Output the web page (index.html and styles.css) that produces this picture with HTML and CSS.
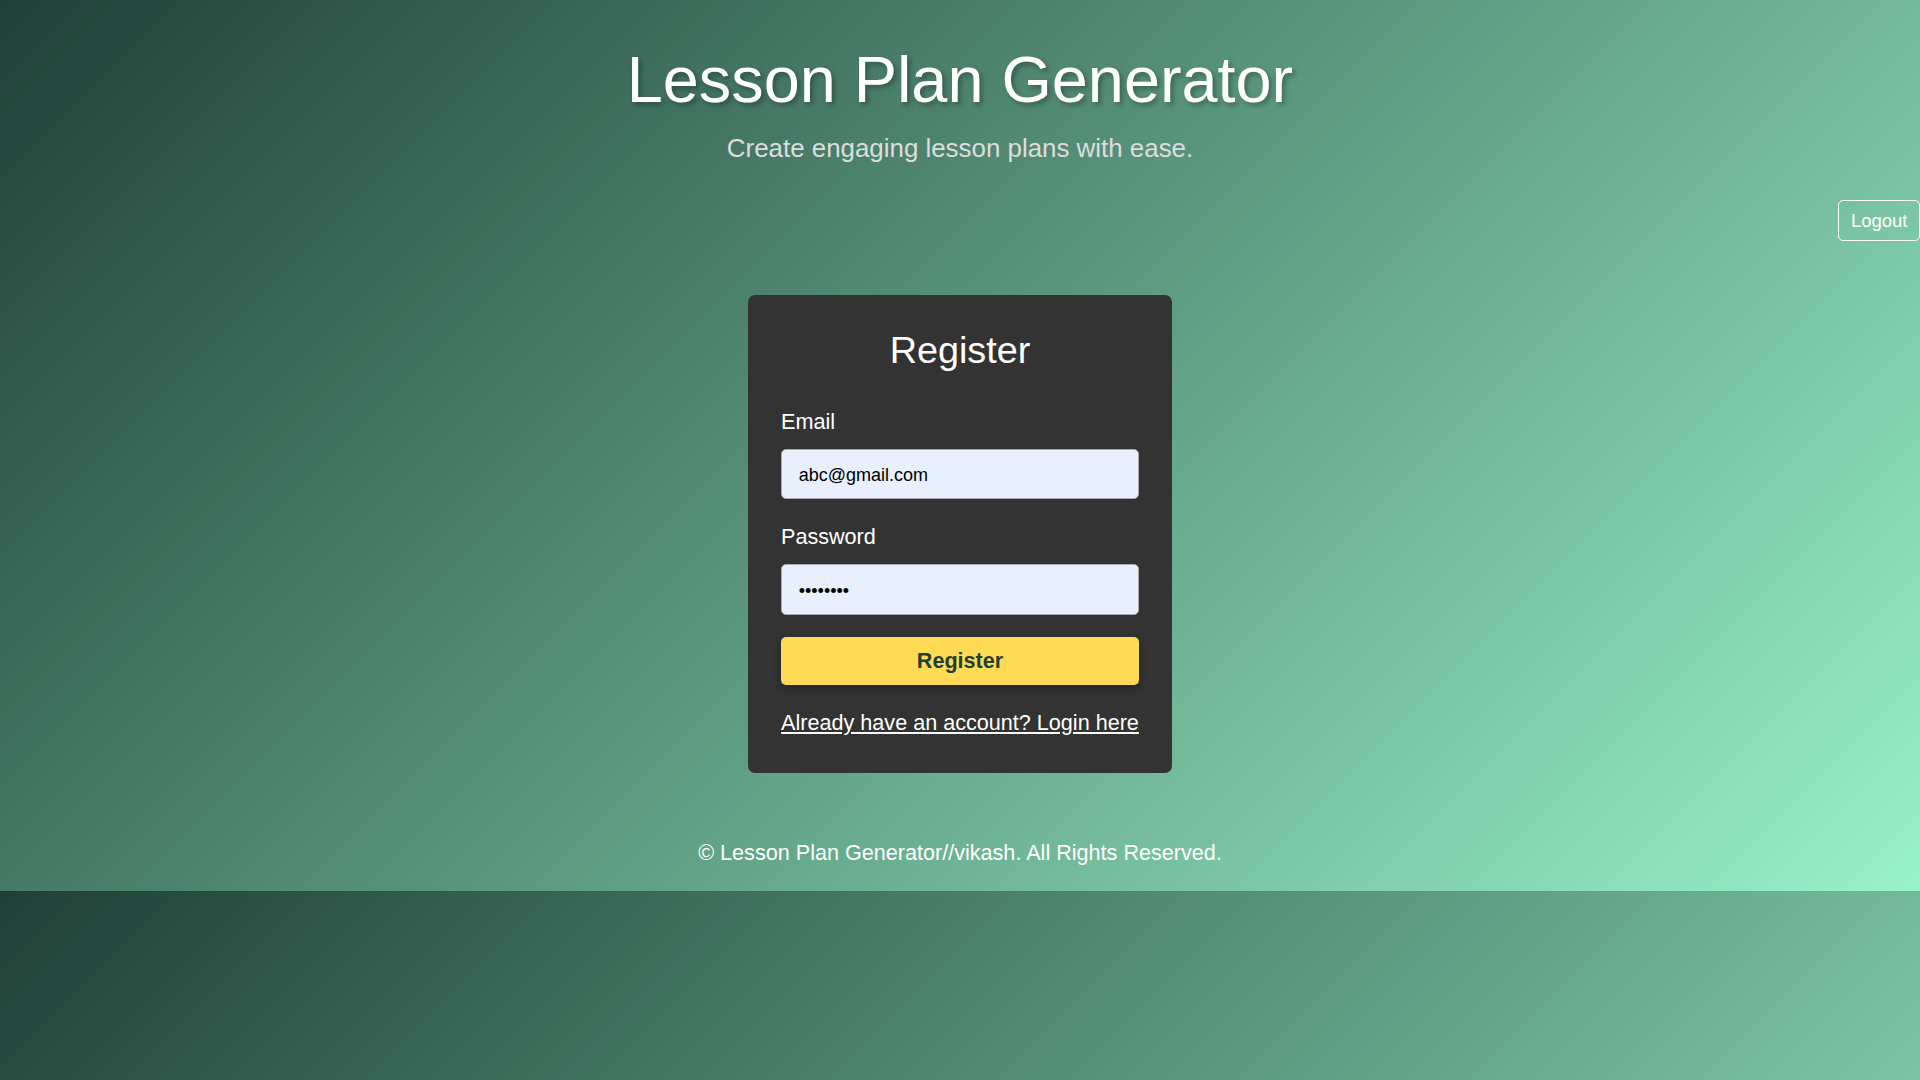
FILE: index.html
```html
<!DOCTYPE html>
<html lang="en">
<head>
<meta charset="UTF-8">
<title>Lesson Plan Generator</title>
<link rel="stylesheet" href="styles.css">
</head>
<body>
<header class="site-header">
  <h1 class="site-title">Lesson Plan Generator</h1>
  <p class="site-subtitle">Create engaging lesson plans with ease.</p>
</header>
<nav class="top-nav">
  <button class="logout-btn" type="button">Logout</button>
</nav>
<main class="main">
  <section class="auth-card">
    <h2 class="auth-title">Register</h2>
    <form class="auth-form">
      <label class="field-label field-label-first" for="email">Email</label>
      <input class="field-input" id="email" type="email" value="abc@gmail.com">
      <label class="field-label field-label-next" for="password">Password</label>
      <input class="field-input field-input-pw" id="password" type="password" value="password">
      <button class="submit-btn" type="button">Register</button>
      <a class="auth-link" href="#">Already have an account? Login here</a>
    </form>
  </section>
</main>
<footer class="site-footer">
  <p class="footer-text">&copy; Lesson Plan Generator//vikash. All Rights Reserved.</p>
</footer>
</body>
</html>
```
FILE: styles.css
```css
html {
  background: linear-gradient(135deg, #1f4037, #99f2c8);
}
body {
  margin: 0;
  font-family: "Liberation Sans", Arial, sans-serif;
  color: #fff;
}
.site-header {
  padding-top: 42.6px;
  text-align: center;
}
.site-title {
  margin: 0;
  font-size: 64.8px;
  line-height: 1.15;
  font-weight: normal;
  text-shadow: 2.7px 2.7px 5.4px rgba(0, 0, 0, 0.3);
}
.site-subtitle {
  margin: 16.5px 0 0;
  font-size: 25.9px;
  line-height: 1.15;
  color: #dddddd;
}
.top-nav {
  display: flex;
  justify-content: flex-end;
  padding-top: 36.6px;
}
.logout-btn {
  box-sizing: border-box;
  height: 41px;
  padding: 0 11.5px;
  background: transparent;
  color: #fff;
  border: 1px solid #fff;
  border-radius: 5px;
  font-family: "Liberation Sans", Arial, sans-serif;
  font-size: 18.5px;
  line-height: 21px;
  cursor: pointer;
}
.main {
  display: flex;
  justify-content: center;
  padding-top: 54px;
}
.auth-card {
  box-sizing: border-box;
  width: 424px;
  padding: 34px 33px 37.1px;
  background: #333333;
  border-radius: 7px;
}
.auth-title {
  margin: 0;
  text-align: center;
  font-size: 37.8px;
  line-height: 1.15;
  font-weight: normal;
}
.auth-form {
  display: flex;
  flex-direction: column;
}
.field-label {
  display: block;
  font-size: 21.6px;
  line-height: 1.15;
}
.field-label-first {
  margin-top: 37.7px;
}
.field-label-next {
  margin-top: 26.3px;
}
.field-input {
  box-sizing: border-box;
  width: 100%;
  height: 50px;
  margin-top: 13.9px;
  padding: 3px 16.7px 0;
  background: #e8f0fe;
  color: #000;
  border: 1px solid #a9a9a9;
  border-radius: 5px;
  font-family: "Liberation Sans", Arial, sans-serif;
  font-size: 18px;
  outline: none;
}
.field-input-pw {
  height: 51px;
  padding-top: 4px;
}
.submit-btn {
  box-sizing: border-box;
  width: 100%;
  height: 48px;
  margin-top: 22px;
  background: #ffda55;
  color: #1f4037;
  border: none;
  border-radius: 5px;
  font-family: "Liberation Sans", Arial, sans-serif;
  font-size: 21.6px;
  font-weight: bold;
  box-shadow: 0 3px 8px rgba(0, 0, 0, 0.3);
  cursor: pointer;
}
.auth-link {
  display: block;
  margin-top: 26.1px;
  text-align: center;
  color: #fff;
  font-size: 21.6px;
  line-height: 1.15;
  text-decoration: underline;
  white-space: nowrap;
}
.site-footer {
  padding-top: 68.1px;
  padding-bottom: 25.1px;
  text-align: center;
}
.footer-text {
  margin: 0;
  font-size: 21.6px;
  line-height: 1.15;
}
```
